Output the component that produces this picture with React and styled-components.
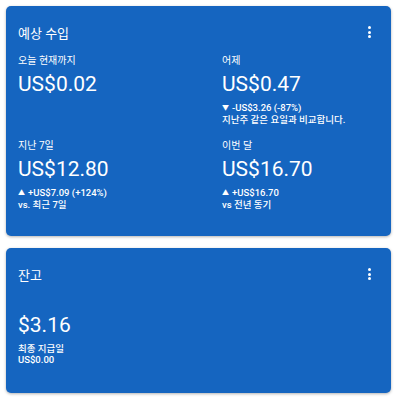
import React from 'react'
import styled, { createGlobalStyle } from 'styled-components'

const GlobalStyle = createGlobalStyle`
	html, body {
		margin: 0;
		padding: 0;
		background: #ffffff;
	}
	body {
		font-family: Roboto, "Noto Sans CJK KR", sans-serif;
		-webkit-font-smoothing: antialiased;
	}
`

const Page = styled.div`
	display: flex;
	flex-direction: column;
	gap: 12px;
	padding: 6px 9px 6px 6px;
`

const Card = styled.section`
	background: #1565c0;
	color: #ffffff;
	border-radius: 5px;
	box-shadow: 0 1px 3px rgba(0, 0, 0, 0.3);
	height: ${props => props.h}px;
	box-sizing: border-box;
	padding: 14px 12px 0 12px;
`

const Header = styled.div`
	display: flex;
	justify-content: space-between;
	align-items: center;
	height: 24px;
`

const Title = styled.h2`
	margin: 0;
	font-size: 13px;
	font-weight: 400;
	font-family: Roboto, "Noto Sans CJK KR", sans-serif;
`

const MenuButton = styled.div`
	display: flex;
	flex-direction: column;
	gap: 1.5px;
	margin-right: 8px;
	span {
		width: 3px;
		height: 3px;
		border-radius: 50%;
		background: #ffffff;
	}
`

const Grid = styled.div`
	display: grid;
	grid-template-columns: 204px 1fr;
	row-gap: 14px;
	margin-top: 10px;
`

const Stat = styled.div`
	display: flex;
	flex-direction: column;
`

const Label = styled.div`
	font-size: 10px;
	line-height: 14px;
`

const Amount = styled.div`
	font-family: Roboto, sans-serif;
	font-size: 21px;
	line-height: 28px;
	margin-top: 2px;
	margin-bottom: 4px;
`

const Note = styled.div`
	font-size: 9.5px;
	font-weight: 500;
	line-height: 11px;
`

const Arrow = styled.span`
	font-size: 7px;
	margin-right: 3px;
	vertical-align: 1px;
`

const Spacer = styled.div`
	height: ${props => props.h}px;
`

const Menu = () => (
	<MenuButton>
		<span /><span /><span />
	</MenuButton>
)

const stats = [
	{ label: '오늘 현재까지', amount: 'US$0.02', notes: [] },
	{ label: '어제', amount: 'US$0.47', notes: [['▼', '-US$3.26 (-87%)'], [null, '지난주 같은 요일과 비교합니다.']] },
	{ label: '지난 7일', amount: 'US$12.80', notes: [['▲', '+US$7.09 (+124%)'], [null, 'vs. 최근 7일']] },
	{ label: '이번 달', amount: 'US$16.70', notes: [['▲', '+US$16.70'], [null, 'vs 전년 동기']] },
]

export default function App() {
	return (
		<>
			<GlobalStyle />
			<Page>
				<Card h={230}>
					<Header>
						<Title>예상 수입</Title>
						<Menu />
					</Header>
					<Grid>
						{stats.map(s => (
							<Stat key={s.label}>
								<Label>{s.label}</Label>
								<Amount>{s.amount}</Amount>
								{s.notes.map(([arrow, text]) => (
									<Note key={text}>
										{arrow && <Arrow>{arrow}</Arrow>}
										{text}
									</Note>
								))}
							</Stat>
						))}
					</Grid>
				</Card>
				<Card h={145}>
					<Header>
						<Title>잔고</Title>
						<Menu />
					</Header>
					<Spacer h={23} />
					<Amount>$3.16</Amount>
					<Note>최종 지급일</Note>
					<Note>US$0.00</Note>
				</Card>
			</Page>
		</>
	)
}
